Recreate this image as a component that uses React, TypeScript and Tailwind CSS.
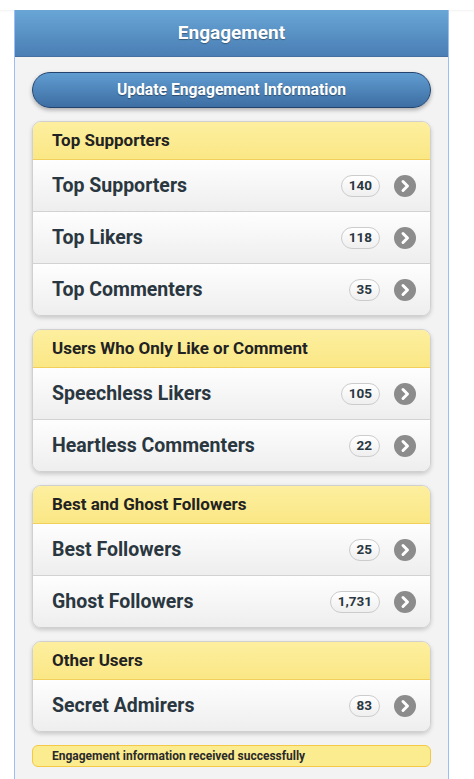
import React from 'react';

type Row = { label: string; count: string };
type Group = { title: string; rows: Row[] };

const GROUPS: Group[] = [
  {
    title: 'Top Supporters',
    rows: [
      { label: 'Top Supporters', count: '140' },
      { label: 'Top Likers', count: '118' },
      { label: 'Top Commenters', count: '35' },
    ],
  },
  {
    title: 'Users Who Only Like or Comment',
    rows: [
      { label: 'Speechless Likers', count: '105' },
      { label: 'Heartless Commenters', count: '22' },
    ],
  },
  {
    title: 'Best and Ghost Followers',
    rows: [
      { label: 'Best Followers', count: '25' },
      { label: 'Ghost Followers', count: '1,731' },
    ],
  },
  {
    title: 'Other Users',
    rows: [{ label: 'Secret Admirers', count: '83' }],
  },
];

const Chevron: React.FC = () => (
  <svg width="22" height="22" viewBox="0 0 22 22" className="shrink-0">
    <circle cx="11" cy="11" r="11" fill="#8c8c8c" />
    <path d="M9 6.5 L13.5 11 L9 15.5" fill="none" stroke="#fff" strokeWidth="3" strokeLinecap="round" strokeLinejoin="round" />
  </svg>
);

const ListGroup: React.FC<{ group: Group }> = ({ group }) => (
  <div className="rounded-[9px] border border-[#d0d0d0] shadow-[0_2px_4px_rgba(0,0,0,0.18)] overflow-hidden">
    <div className="h-[38px] flex items-center pl-[19px] bg-gradient-to-b from-[#fdef9f] to-[#fae785] border-b border-[#f2cf5a] text-[17px] font-bold text-[#222]">
      {group.title}
    </div>
    {group.rows.map((row, i) => {
      const last = i === group.rows.length - 1;
      return (
        <div
          key={row.label}
          className={`flex items-center pl-[19px] pr-[14px] bg-gradient-to-b from-[#fefefe] to-[#eeeeee] ${
            last ? 'h-[51px]' : 'h-[52px] border-b border-[#d2d2d2]'
          }`}
        >
          <span className="flex-1 text-[19.5px] font-bold text-[#2a3740]">{row.label}</span>
          <span className="h-[22px] min-w-[30px] px-[7px] mr-[14px] flex items-center justify-center rounded-full border border-[#cccccc] bg-gradient-to-b from-[#ffffff] to-[#efefef] text-[13.5px] font-bold text-[#2a3740]">
            {row.count}
          </span>
          <Chevron />
        </div>
      );
    })}
  </div>
);

export default function App() {
  return (
    <div className="min-h-[779px] bg-white font-['Roboto','Liberation_Sans',sans-serif]">
      <div className="h-[10px] bg-white shadow-[0_1px_2px_rgba(0,0,0,0.06)]" />
      <div className="ml-[14px] w-[435px] min-h-[769px] border-x border-[#9dbdf6] bg-[#f3f3f3]">
        <div className="h-[47px] flex items-center justify-center bg-gradient-to-b from-[#69a6d6] to-[#4a7eb4] border-b border-[#44719f] text-white text-[19px] font-bold [text-shadow:0_1px_1px_rgba(0,0,0,0.35)]">
          Engagement
        </div>
        <div className="px-[17px] pt-[15px] pb-4 flex flex-col gap-[13px]">
          <button className="h-[36px] w-full rounded-full border border-[#24446f] bg-gradient-to-b from-[#619dd1] to-[#3d6ea3] text-white text-[15.7px] font-bold shadow-[0_2px_4px_rgba(0,0,0,0.3)] [text-shadow:0_1px_1px_rgba(0,0,0,0.4)]">
            Update Engagement Information
          </button>
          {GROUPS.map(g => (
            <ListGroup key={g.title} group={g} />
          ))}
          <div className="h-[22px] flex items-center pl-[19px] rounded-[6px] border border-[#f3c945] bg-[#fcec90] text-[12px] font-bold text-[#2a2a2a]">
            Engagement information received successfully
          </div>
        </div>
      </div>
    </div>
  );
}
